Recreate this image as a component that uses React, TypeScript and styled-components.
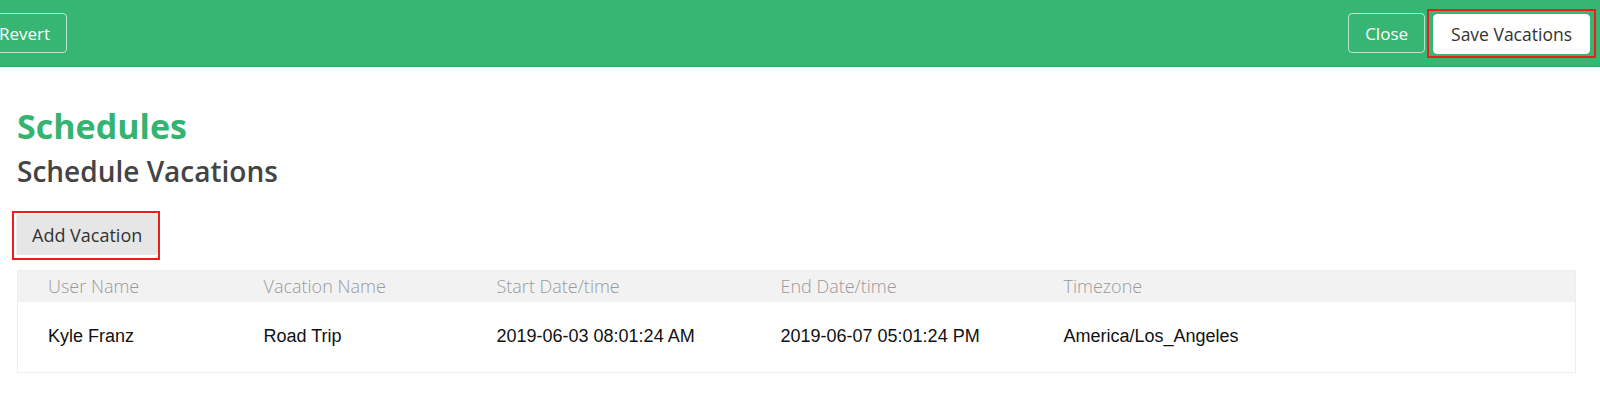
import React from 'react';
import styled, { createGlobalStyle, css } from 'styled-components';

const GlobalStyle = createGlobalStyle`
  html, body {
    margin: 0;
    padding: 0;
    background: #fff;
    font-family: 'Open Sans', 'Liberation Sans', sans-serif;
    overflow: hidden;
  }
  *, *::before, *::after {
    box-sizing: border-box;
  }
`;

const TopBar = styled.header`
  display: flex;
  justify-content: space-between;
  align-items: center;
  height: 67px;
  padding-right: 4px;
  background: #36b573;
  border-bottom: 1px solid #2ca763;
`;

const BarGroup = styled.div<{ $shift?: number }>`
  display: flex;
  align-items: center;
  gap: 2px;
  margin-left: ${(p) => (p.$shift ? `${p.$shift}px` : '0')};
`;

const BarButton = styled.button<{ $variant: 'ghost' | 'solid' }>`
  height: 40px;
  border-radius: 4px;
  font-family: 'Open Sans', sans-serif;
  cursor: pointer;
  ${(p) =>
    p.$variant === 'ghost'
      ? css`
          padding: 0 16px;
          background: transparent;
          color: #fff;
          font-size: 17px;
          font-weight: 500;
          border: 1px solid rgba(255, 255, 255, 0.65);
        `
      : css`
          padding: 0 17px;
          background: #fff;
          color: #333;
          font-size: 17.5px;
          font-weight: 400;
          border: 1px solid #fff;
        `}
`;

const Highlight = styled.div<{ $pad: string }>`
  display: inline-flex;
  padding: ${(p) => p.$pad};
  border: 2px solid #ee1c1c;
`;

const Content = styled.main`
  padding: 40px 24px 0 17px;
`;

const Title = styled.h1`
  margin: 0;
  font-size: 34px;
  line-height: 38px;
  font-weight: 700;
  color: #34b470;
`;

const Subtitle = styled.h2`
  margin: 9px 0 0;
  font-size: 28px;
  line-height: 34px;
  font-weight: 600;
  color: #444;
`;

const ActionRow = styled.div`
  margin: 23px 0 0 -5px;
`;

const GrayButton = styled.button`
  height: 41px;
  padding: 0 16px;
  border: none;
  border-radius: 3px;
  background: #e6e6e6;
  color: #333;
  font-family: 'Open Sans', sans-serif;
  font-size: 18px;
  box-shadow: inset 1px 1px 0 #f2f2f2;
`;

const Table = styled.table`
  margin-top: 10px;
  width: 100%;
  border-collapse: collapse;
  border: 1px solid #eeeeee;
  table-layout: fixed;
`;

const HeadCell = styled.th<{ $w?: number }>`
  width: ${(p) => (p.$w ? `${p.$w}px` : 'auto')};
  height: 31px;
  padding: 0 0 0 30px;
  background: #f2f2f2;
  color: #9a9a9a;
  font-family: 'Open Sans', sans-serif;
  font-size: 18px;
  font-weight: 300;
  text-align: left;
`;

const Cell = styled.td`
  height: 71px;
  padding: 0 0 0 30px;
  color: #111;
  font-family: 'Liberation Sans', Arial, sans-serif;
  font-size: 18px;
  font-weight: 400;
`;

const columns = [
  { label: 'User Name', width: 216 },
  { label: 'Vacation Name', width: 233 },
  { label: 'Start Date/time', width: 284 },
  { label: 'End Date/time', width: 283 },
  { label: 'Timezone' },
];

const vacations = [
  {
    user: 'Kyle Franz',
    name: 'Road Trip',
    start: '2019-06-03 08:01:24 AM',
    end: '2019-06-07 05:01:24 PM',
    tz: 'America/Los_Angeles',
  },
];

export default function App() {
  return (
    <>
      <GlobalStyle />
      <TopBar>
        <BarGroup $shift={-18}>
          <BarButton $variant="ghost">Revert</BarButton>
        </BarGroup>
        <BarGroup>
          <BarButton $variant="ghost">Close</BarButton>
          <Highlight $pad="3px 4px 2px 4px">
            <BarButton $variant="solid">Save Vacations</BarButton>
          </Highlight>
        </BarGroup>
      </TopBar>
      <Content>
        <Title>Schedules</Title>
        <Subtitle>Schedule Vacations</Subtitle>
        <ActionRow>
          <Highlight $pad="1px 0 3px 2px">
            <GrayButton>Add Vacation</GrayButton>
          </Highlight>
        </ActionRow>
        <Table>
          <thead>
            <tr>
              {columns.map((c) => (
                <HeadCell key={c.label} $w={c.width}>
                  {c.label}
                </HeadCell>
              ))}
            </tr>
          </thead>
          <tbody>
            {vacations.map((v) => (
              <tr key={v.user + v.name}>
                <Cell>{v.user}</Cell>
                <Cell>{v.name}</Cell>
                <Cell>{v.start}</Cell>
                <Cell>{v.end}</Cell>
                <Cell>{v.tz}</Cell>
              </tr>
            ))}
          </tbody>
        </Table>
      </Content>
    </>
  );
}
